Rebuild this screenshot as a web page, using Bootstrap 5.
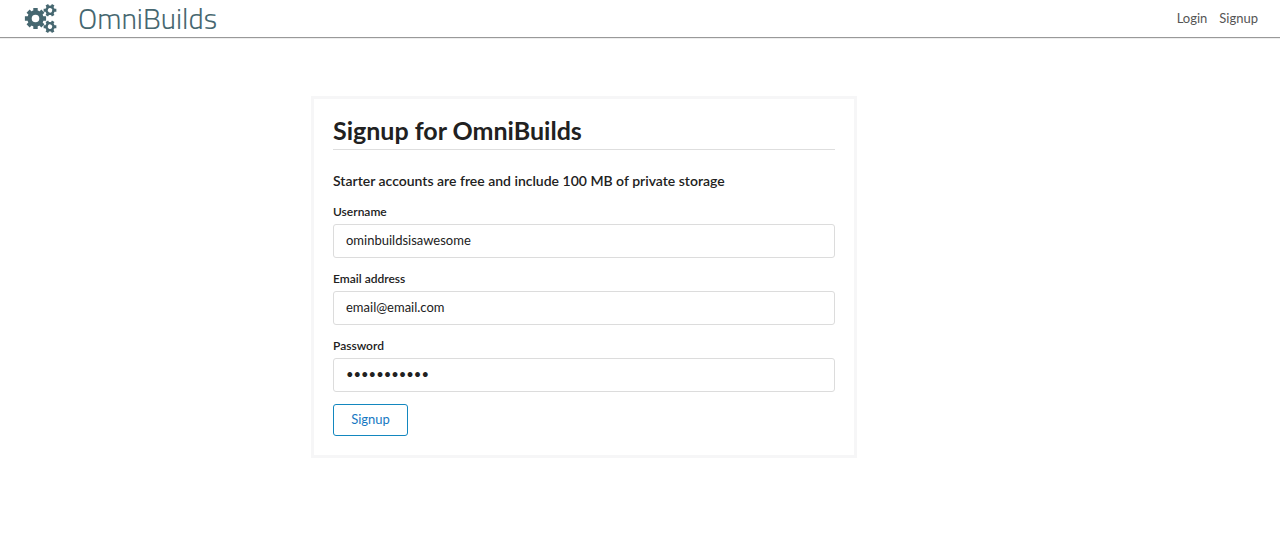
<!DOCTYPE html>
<html lang="en">
<head>
<meta charset="utf-8">
<meta name="viewport" content="width=device-width, initial-scale=1">
<title>Signup - OmniBuilds</title>
<link href="https://cdn.jsdelivr.net/npm/bootstrap@5.3.0/dist/css/bootstrap.min.css" rel="stylesheet">
<style>
  body { font-family: Lato, "Liberation Sans", sans-serif; font-size: 13px; line-height: 18px; color: #212121; }
  .site-header { height: 39px; padding: 0 22px 2px 24px; border-bottom: 1px solid #eee; box-shadow: inset 0 -1px #999; }
  .brand { gap: 20px; color: #466770; }
  .brand-name { font-family: "Titillium Web", "Exo 2", Roboto, sans-serif; font-weight: 300; font-size: 29px; line-height: 36px; }
  .top-link { color: #555; }
  .page-grid { display: grid; grid-template-columns: 311fr 546fr 423fr; padding-top: 57px; }
  .signup-box { grid-column: 2; border: 3px solid #f6f6f7; padding: 18px 19px 19px; }
  .signup-title { font-size: 25px; line-height: 26px; font-weight: 700; border-bottom: 1px solid #dedede; padding-bottom: 6px; margin-bottom: 22px; }
  .signup-note { font-size: 14px; line-height: 18px; font-weight: 600; margin-bottom: 13px; }
  .field-label { font-size: 12px; line-height: 18px; font-weight: 600; margin-bottom: 3px; }
  .field { margin-bottom: 12px; }
  .form-control { height: 34px; padding: 6px 12px 8px; font-size: 13px; line-height: 18px; color: #212121; border-color: #dcdcdc; border-radius: 3px; }
  .btn-signup { width: 75px; height: 32px; padding: 0 0 2px; font-size: 13px; line-height: 18px; border-radius: 3px; color: #1678c2; border-color: #1387bf; }
</style>
</head>
<body class="bg-white">
<header class="site-header d-flex align-items-center justify-content-between">
  <a href="#" class="brand d-flex align-items-center text-decoration-none">
    <svg width="34" height="32" viewBox="0 0 34 32" fill="none" stroke="currentColor" aria-hidden="true">
      <defs>
        <g id="gear">
          <circle r="6" stroke-width="4.4"/>
          <path stroke-width="4.4" d="M0-7V-10.6M0 7V10.6M7 0H10.6M-7 0H-10.6M5-5L7.4-7.4M-5-5L-7.4-7.4M5 5L7.4 7.4M-5 5L-7.4 7.4"/>
        </g>
        <g id="gear-small">
          <circle r="3.5" stroke-width="2.5"/>
          <path stroke-width="2.9" d="M0-4V-6.4M0 4V6.4M3.5-2L5.5-3.2M-3.5-2L-5.5-3.2M3.5 2L5.5 3.2M-3.5 2L-5.5 3.2"/>
        </g>
      </defs>
      <use href="#gear" x="11.5" y="16.5"/>
      <use href="#gear-small" transform="translate(26 8.3) rotate(30)"/>
      <use href="#gear-small" transform="translate(26 24.7) rotate(30)"/>
    </svg>
    <span class="brand-name">OmniBuilds</span>
  </a>
  <nav class="d-flex gap-2" aria-label="Account">
    <a href="#" class="top-link text-decoration-none me-1">Login</a>
    <a href="#" class="top-link text-decoration-none">Signup</a>
  </nav>
</header>
<main class="page-grid">
  <form class="signup-box">
    <h1 class="signup-title">Signup for OmniBuilds</h1>
    <p class="signup-note">Starter accounts are free and include 100 MB of private storage</p>
    <div class="field">
      <label class="field-label d-block" for="username">Username</label>
      <input class="form-control" type="text" id="username" value="ominbuildsisawesome">
    </div>
    <div class="field">
      <label class="field-label d-block" for="email">Email address</label>
      <input class="form-control" type="email" id="email" value="email@email.com">
    </div>
    <div class="field">
      <label class="field-label d-block" for="password">Password</label>
      <input class="form-control" type="password" id="password" value="omnibuilds1">
    </div>
    <button type="submit" class="btn btn-signup">Signup</button>
  </form>
</main>
<script src="https://cdn.jsdelivr.net/npm/bootstrap@5.3.0/dist/js/bootstrap.bundle.min.js"></script>
</body>
</html>
